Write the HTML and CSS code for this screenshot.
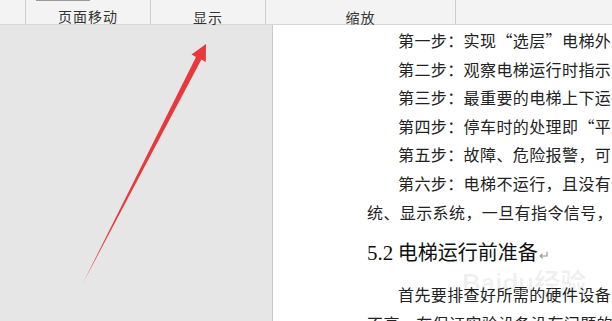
FILE: index.html
```html
<!DOCTYPE html>
<html lang="zh-CN">
<head>
    <meta charset="UTF-8">
    <meta name="viewport" content="width=device-width, initial-scale=1.0">
    <title>电梯运行</title>
    <link rel="stylesheet" href="styles.css">
</head>
<body>
    <div class="ribbon">
        <div class="group group-lead"></div>
        <div class="group group-move">
            <span class="btn-stub"></span>
            <span class="group-label">页面移动</span>
        </div>
        <div class="group group-show">
            <span class="group-label">显示</span>
        </div>
        <div class="group group-zoom">
            <span class="group-label">缩放</span>
        </div>
        <div class="group group-rest"></div>
    </div>

    <div class="workspace">
        <div class="side-panel"></div>
        <div class="page">
            <p class="para">第一步：实现“选层”电梯外上下行按钮的显示功能。</p>
            <p class="para">第二步：观察电梯运行时指示灯的变化情况。</p>
            <p class="para">第三步：最重要的电梯上下运行的控制过程。</p>
            <p class="para">第四步：停车时的处理即“平层”过程。</p>
            <p class="para">第五步：故障、危险报警，可以及时处理。</p>
            <p class="para">第六步：电梯不运行，且没有信号时进入待机系<br><span class="cont">统、显示系统，一旦有指令信号，电梯立即响应。</span></p>
            <h2 class="heading"><span class="num">5.2</span> 电梯运行前准备<span class="mark">↵</span></h2>
            <p class="para">首先要排查好所需的硬件设备是否完好，保证<br><span class="cont">不高，在保证实验设备没有问题的情况下进行。</span></p>
        </div>
    </div>

    <!-- 百度经验水印 -->
    <div class="watermark">Bai<span class="paw">du</span>经验</div>

    <!-- 标注箭头 -->
    <svg class="arrow" width="612" height="321" viewBox="0 0 612 321">
        <polygon points="206,44 191.5,54.5 196,57 83,283 201.4,59.6 205.8,62" fill="#e8383c"/>
    </svg>
</body>
</html>
```

FILE: styles.css
```css
body {
    margin: 0;
    width: 612px;
    height: 321px;
    overflow: hidden;
    font-family: "Noto Sans CJK SC", "Noto Sans", sans-serif;
    color: #222;
    background: #fff;
}

.ribbon {
    display: flex;
    height: 24px;
    background: #f3f3f3;
    border-bottom: 1px solid #d6d6d6;
}

.group {
    display: flex;
    flex-direction: column;
    align-items: center;
    border-right: 1px solid #cdcdcd;
    box-sizing: border-box;
}

.group-lead {
    width: 26px;
}

.group-move {
    width: 125px;
}

.group-show {
    width: 115px;
}

.group-zoom {
    width: 190px;
}

.group-rest {
    flex: 1;
    border-right: none;
}

.btn-stub {
    align-self: flex-start;
    margin-left: 10px;
    width: 52px;
    height: 1px;
    border: 1px solid #9a9a9a;
    border-top: none;
    background: #e9e9e9;
}

.group-label {
    margin-top: 7px;
    font-size: 14px;
    line-height: 16px;
    letter-spacing: 1px;
    color: #333;
}

.group-show .group-label,
.group-zoom .group-label {
    margin-top: 9px;
}

.workspace {
    display: flex;
    height: 296px;
}

.side-panel {
    width: 272px;
    background: #e6e6e6;
    border-right: 1px solid #c9c9c9;
}

.page {
    flex: 1;
    padding: 1px 0 0 94px;
    overflow: hidden;
    white-space: nowrap;
}

.para {
    margin: 0;
    font-size: 16px;
    line-height: 28.6px;
    letter-spacing: 0.4px;
    text-indent: 31px;
}

.cont {
    display: inline-block;
    margin-left: -31px;
}

.heading {
    margin: 11px 0 10px;
    font-size: 20px;
    line-height: 30px;
    font-weight: normal;
    color: #111;
}

.num {
    font-family: "Liberation Serif", serif;
    font-size: 21px;
}

.mark {
    margin-left: 1px;
    font-size: 13px;
    color: #999;
}

.watermark {
    position: absolute;
    left: 462px;
    top: 262px;
    font-family: "Liberation Sans", "Noto Sans CJK SC", sans-serif;
    font-size: 26px;
    font-weight: bold;
    color: rgba(0, 0, 0, 0.06);
    pointer-events: none;
}

.arrow {
    position: absolute;
    left: 0;
    top: 0;
    pointer-events: none;
}
```
